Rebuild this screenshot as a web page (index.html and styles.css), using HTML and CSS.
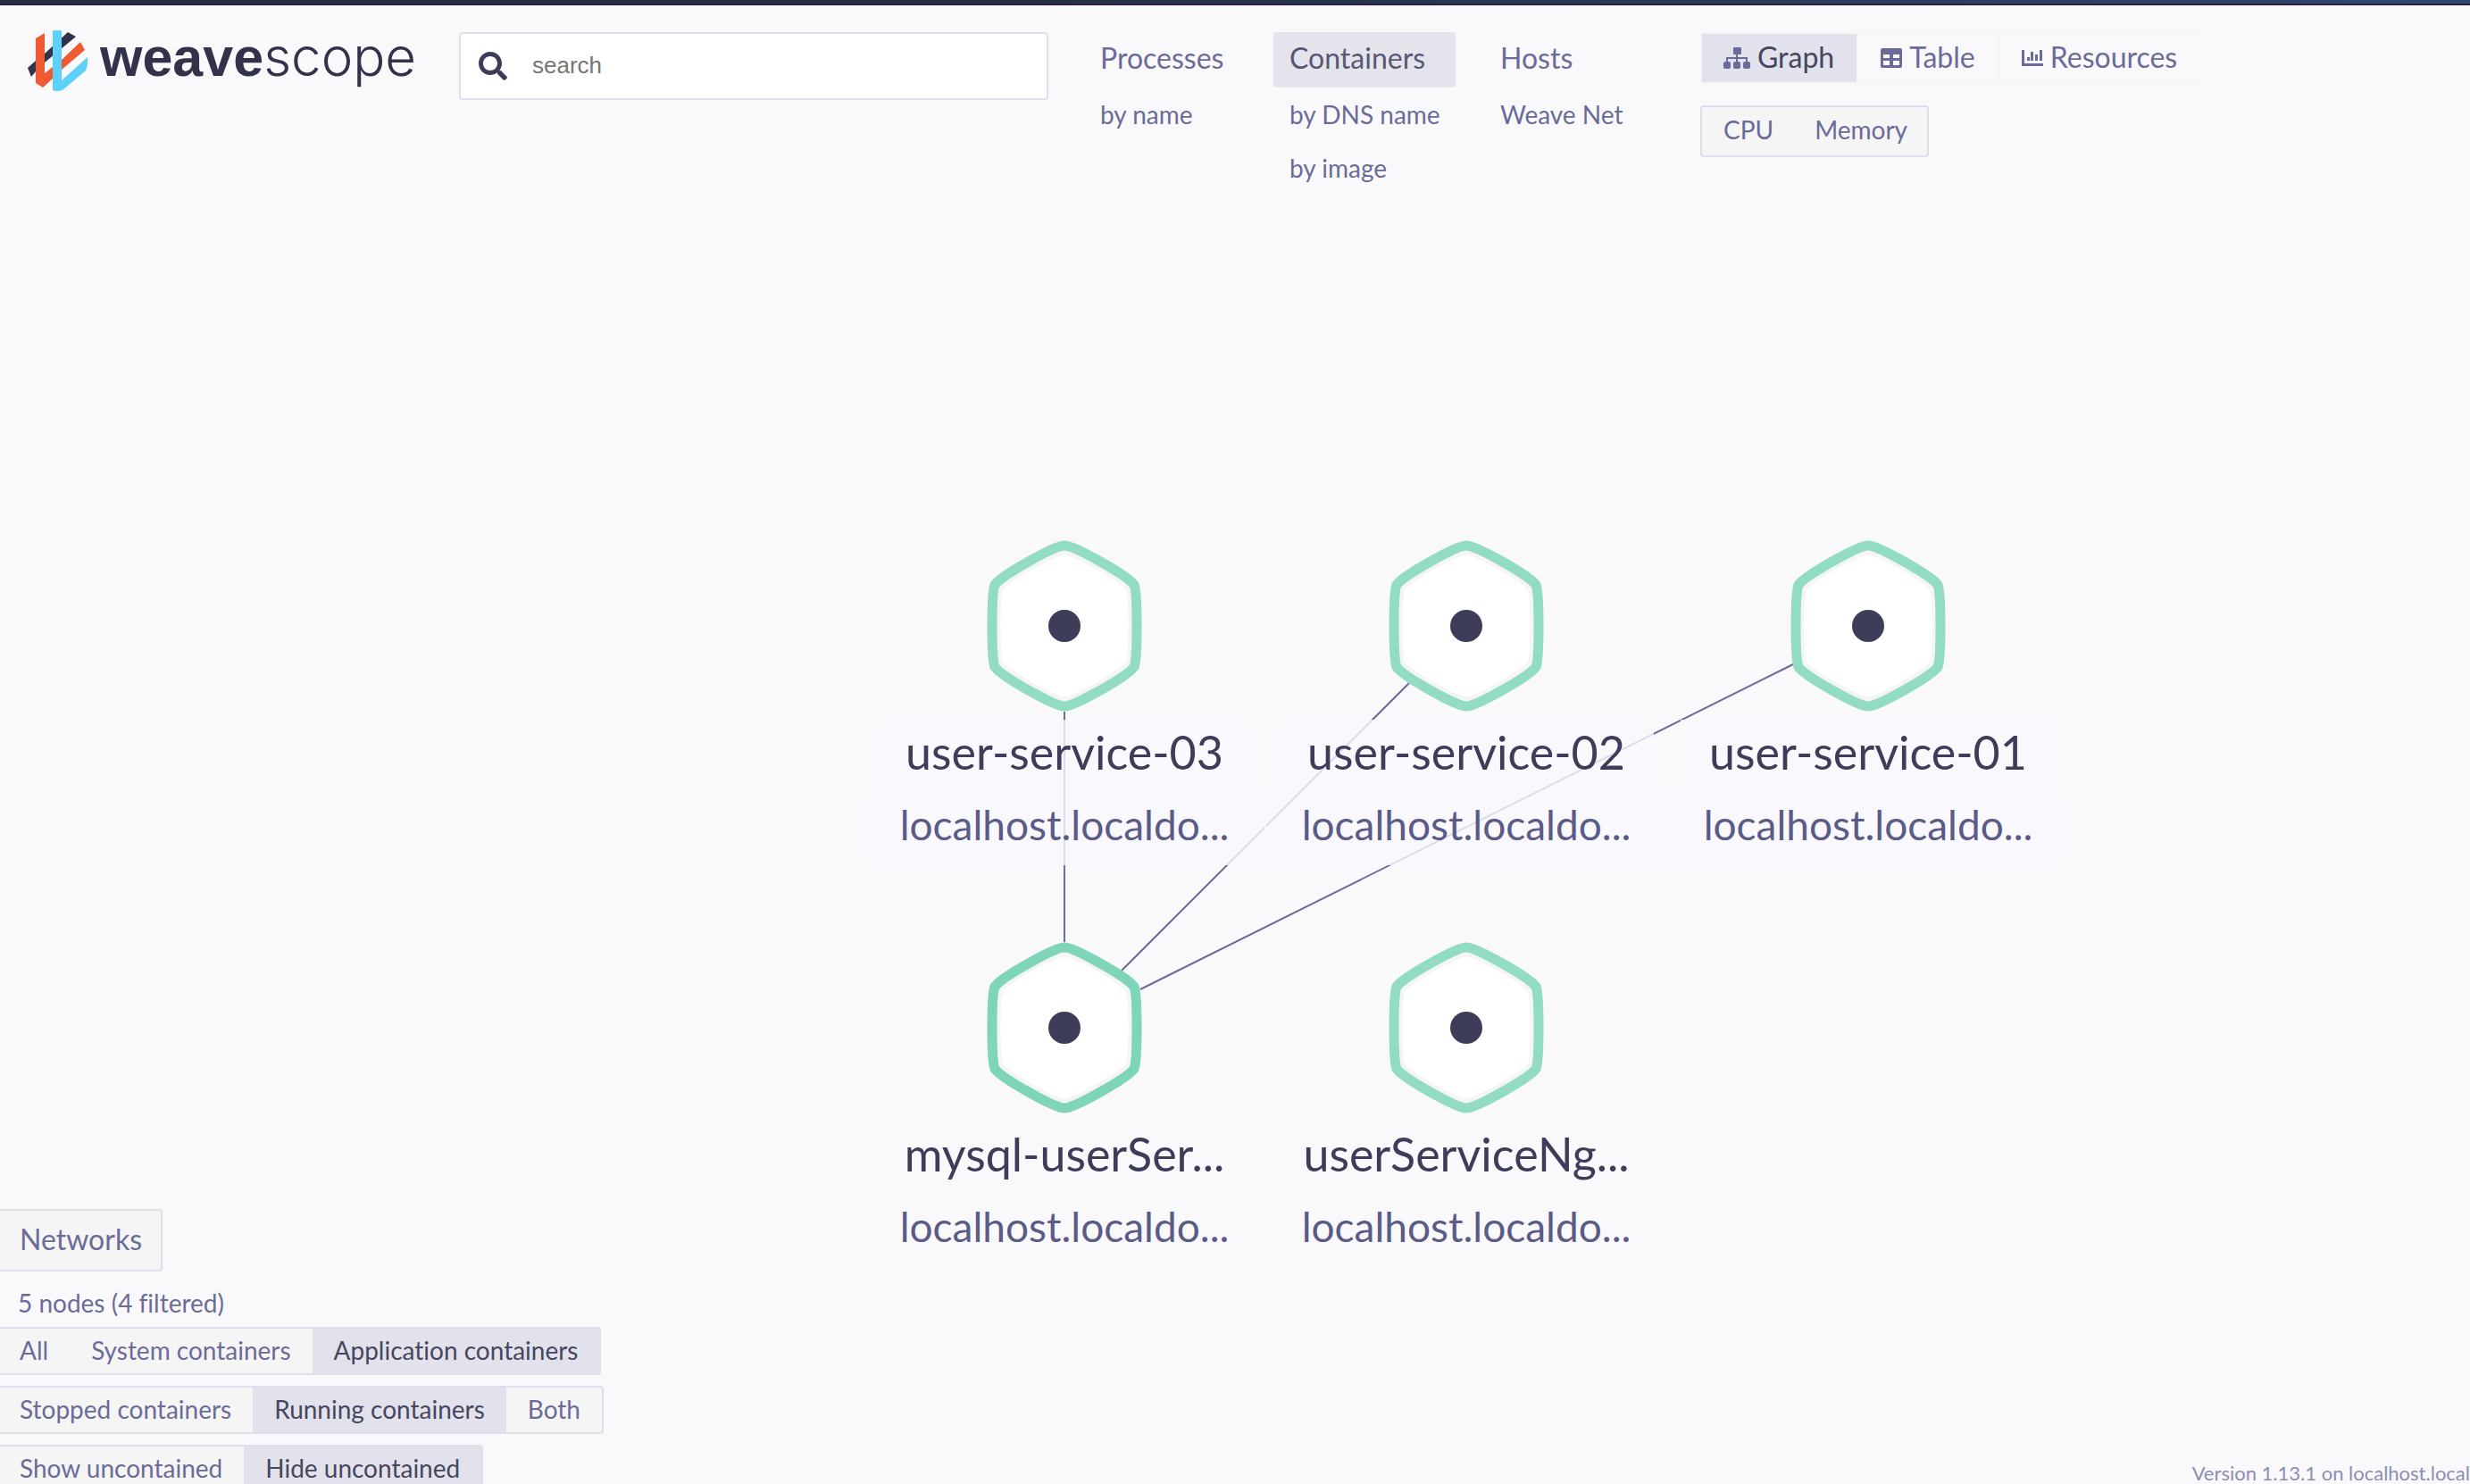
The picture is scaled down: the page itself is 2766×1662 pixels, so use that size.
FILE: index.html
```html
<!DOCTYPE html>
<html lang="en">
<head>
<meta charset="utf-8">
<title>Weave Scope</title>
<link rel="stylesheet" href="styles.css">
</head>
<body>
<div class="app">
  <div class="window-edge"></div>
  <header class="header">
    <a class="logo" href="#">
      <svg class="logo-mark" viewBox="0 0 68 68" aria-hidden="true">
        <path fill="#32324b" d="M0 42 9 34V46L4 52Z M19 26 45 2 54 7 19 36Z"/>
        <path fill="#ef5a32" d="M9 9 19 3V48L28 41V54L17 64 9 59Z M38 33 59 13 64 22 38 44Z"/>
        <path fill="#5dd0fc" d="M28 0H38V56L67 30Q68 38 65 45L39 67Q33 69 28 67Z"/>
      </svg>
      <span class="logo-text"><b class="logo-weave">weave</b><span class="logo-scope">scope</span></span>
    </a>
    <label class="search">
      <svg class="search-icon" viewBox="0 0 512 512" role="img" aria-label="Search"><path d="M505 442.700 405.300 343c-4.500-4.500-10.600-7-17-7H372c27.600-35.300 44-79.700 44-128C416 93.100 322.900 0 208 0S0 93.100 0 208s93.100 208 208 208c48.300 0 92.700-16.400 128-44v16.300c0 6.400 2.500 12.500 7 17l99.700 99.700c9.400 9.400 24.600 9.400 33.900 0l28.300-28.300c9.400-9.400 9.400-24.600.1-34zM208 336c-70.700 0-128-57.200-128-128 0-70.700 57.200-128 128-128 70.700 0 128 57.200 128 128 0 70.700-57.200 128-128 128z"/></svg>
      <input class="search-input" type="text" placeholder="search">
    </label>
    <nav class="topologies">
      <div class="topology"><a class="topology-main" href="#">Processes</a><a class="topology-sub" href="#">by name</a></div>
      <div class="topology"><a class="topology-main active" href="#">Containers</a><a class="topology-sub" href="#">by DNS name</a><a class="topology-sub" href="#">by image</a></div>
      <div class="topology"><a class="topology-main" href="#">Hosts</a><a class="topology-sub" href="#">Weave Net</a></div>
    </nav>
    <div class="views">
      <div class="view-modes">
        <button class="view-mode active" type="button"><svg class="icon-graph" viewBox="0 0 30 24" aria-hidden="true"><rect x="11" width="9" height="8" rx="1"/><path d="M14 7h2v4h11v5h-2v-3h-9v3h-2v-3H5v3H3v-5h11z"/><rect y="16" width="8" height="8" rx="2"/><rect x="11" y="16" width="8" height="8" rx="2"/><rect x="22" y="16" width="8" height="8" rx="2"/></svg>Graph</button>
        <button class="view-mode" type="button"><svg class="icon-small" viewBox="0 0 24 24" aria-hidden="true"><path fill-rule="evenodd" d="M2 1h20a2 2 0 0 1 2 2v18a2 2 0 0 1-2 2H2a2 2 0 0 1-2-2V3a2 2 0 0 1 2-2zM3 8v4h7V8zM14 8v4h7V8zM3 15v5h7v-5zM14 15v5h7v-5z"/></svg>Table</button>
        <button class="view-mode" type="button"><svg class="icon-small" viewBox="0 0 24 24" aria-hidden="true"><path d="M0 3h3v15h21v3H0zM6 11h3v4H6zM10 5h3v10h-3zM15 8h3v7h-3zM20 3h3v12h-3z"/></svg>Resources</button>
      </div>
      <div class="metrics">
        <button class="metric" type="button">CPU</button>
        <button class="metric" type="button">Memory</button>
      </div>
    </div>
  </header>

  <svg class="graph" role="img" aria-label="Container graph">
    <defs>
      <path id="hex" d="M0-90C11-90 70-57 78-46C82-36 82 36 78 46C70 57 11 90 0 90C-11 90-70 57-78 46C-82 36-82-36-78-46C-70-57-11-90 0-90Z"/>
      <g id="node"><use href="#hex" class="node-border"/><use href="#hex" class="node-fill" transform="scale(.883)"/><circle r="18" class="node-dot"/></g>
      <g id="veil"><rect class="veil" x="-210" y="105" width="420" height="82"/><rect class="veil" x="-226" y="187" width="452" height="81"/></g>
    </defs>
    <path class="edge" d="M1192 797V1055M1578 765 1256 1087M2008 744 1277 1108"/>
    <g class="node" transform="translate(1192 701)"><use href="#veil"/><use href="#node"/><text class="node-name" y="161">user-service-03</text><text class="node-host" y="240">localhost.localdo...</text></g>
    <g class="node" transform="translate(1642 701)"><use href="#veil"/><use href="#node"/><text class="node-name" y="161">user-service-02</text><text class="node-host" y="240">localhost.localdo...</text></g>
    <g class="node" transform="translate(2092 701)"><use href="#veil"/><use href="#node"/><text class="node-name" y="161">user-service-01</text><text class="node-host" y="240">localhost.localdo...</text></g>
    <g class="node strong" transform="translate(1192 1151)"><use href="#node"/><text class="node-name" y="161">mysql-userSer...</text><text class="node-host" y="240">localhost.localdo...</text></g>
    <g class="node" transform="translate(1642 1151)"><use href="#node"/><text class="node-name" y="161">userServiceNg...</text><text class="node-host" y="240">localhost.localdo...</text></g>
  </svg>

  <aside class="filters">
    <button class="networks" type="button">Networks</button>
    <p class="count">5 nodes (4 filtered)</p>
    <div class="filter-row"><button class="filter" type="button">All</button><button class="filter" type="button">System containers</button><button class="filter active" type="button">Application containers</button></div>
    <div class="filter-row"><button class="filter" type="button">Stopped containers</button><button class="filter active" type="button">Running containers</button><button class="filter" type="button">Both</button></div>
    <div class="filter-row"><button class="filter" type="button">Show uncontained</button><button class="filter active" type="button">Hide uncontained</button></div>
  </aside>
  <footer class="version">Version 1.13.1 on localhost.local</footer>
</div>
</body>
</html>
```
FILE: styles.css
```css
* { box-sizing: border-box; }
body {
  margin: 0;
  font-family: Lato, sans-serif;
  font-size: 28px;
  font-variant-ligatures: none;
  color: #6b6b9a;
  background: #f9f9fc;
}
a { color: inherit; text-decoration: none; }
button {
  margin: 0;
  border: 0;
  background: none;
  color: inherit;
  font: inherit;
  font-variant-ligatures: none;
  white-space: nowrap;
}
.app { position: relative; height: 100vh; overflow: hidden; }
.window-edge {
  height: 6px;
  border-bottom: 2px solid #2a1d45;
  background: linear-gradient(90deg, #242f42 40%, #304870);
}

/* Header */
.header { position: relative; z-index: 1; display: flex; align-items: flex-start; padding: 28px 32px 0 31px; }
.logo { display: flex; width: 483px; color: #32324b; }
.logo-mark { width: 68px; height: 68px; margin-right: 13px; }
.logo-text { display: flex; align-items: baseline; }
.logo-weave { font: 700 61px/58px "Liberation Sans", sans-serif; }
.logo-scope { font: 300 60px/58px Inter, sans-serif; }
.search {
  display: flex;
  align-items: center;
  width: 660px;
  height: 76px;
  margin-top: 2px;
  padding: 0 20px;
  border: 2px solid #dfdfeb;
  border-radius: 4px;
  background: #fff;
}
.search-icon { width: 32px; height: 32px; fill: #3d3d5a; }
.search-input {
  flex: 1;
  min-width: 0;
  margin-left: 28px;
  padding: 0 0 2px;
  border: 0;
  outline: 0;
  background: none;
  font: 26px "Liberation Sans", sans-serif;
}
.search-input::placeholder { color: #757575; }
.topologies { display: grid; grid-template-columns: 180px 204px 210px; gap: 32px; margin: 2px 0 0 40px; white-space: nowrap; }
.topology { display: flex; flex-direction: column; }
.topology-main { height: 62px; padding: 0 18px; border-radius: 4px; font-size: 32px; line-height: 58px; }
.topology-main.active { background: #e4e4ed; color: #585873; }
.topology-sub { padding: 0 18px; font-size: 28px; line-height: 60px; }
.views { margin: 2px 0 0 32px; }
.view-modes { display: flex; width: max-content; border: 2px solid #f5f5f8; border-radius: 4px; }
.view-mode {
  display: flex;
  align-items: center;
  gap: 8px;
  height: 54px;
  padding: 0 25px 4px;
  border-left: 2px solid #f5f5f8;
  font-size: 32px;
}
.view-mode:first-child { padding-left: 24px; border-left: 0; }
.view-mode.active, .filter.active { background: #e2e2ec; color: #46465f; }
.view-mode svg { position: relative; top: 2px; fill: #6b6b9a; }
.icon-graph { width: 30px; height: 24px; }
.icon-small { width: 24px; height: 24px; }
.metrics { display: flex; width: max-content; margin-top: 24px; border: 2px solid #dfdfeb; border-radius: 4px; background: #f5f5f5; }
.metric { height: 54px; padding: 0 22px 4px 24px; font-size: 28px; }

/* Graph canvas */
.graph { position: absolute; top: 0; left: 0; width: 100%; height: 100%; }
.edge { fill: none; stroke: #6b6b9a; stroke-width: 2; }
.veil { fill: #f9f9fc; fill-opacity: .8; }
.node { stroke: #92dcc2; text-anchor: middle; }
.node.strong { stroke: #7fd5b8; }
.node-border { fill: #f5f5f5; stroke-width: 11; }
.node-fill { fill: #fff; stroke: none; }
.node-dot { fill: #3d3d5a; stroke: none; }
.veil, .node text { stroke: none; }
.node-name { fill: #3d3d5a; font-size: 52px; }
.node-host { fill: #5b5b88; font-size: 46px; }

/* Overlays on the canvas */
.filters { position: absolute; left: 0; bottom: -10px; display: flex; flex-direction: column; align-items: flex-start; gap: 12px; }
.networks {
  height: 70px;
  padding: 0 21px 4px 22px;
  border: 2px solid #dfdfeb;
  border-left: 0;
  border-radius: 0 4px 4px 0;
  background: #f5f5f5;
  font-size: 32px;
}
.count { margin: 4px 0 -4px; padding-left: 20px; font-size: 28px; line-height: 38px; }
.filter-row { display: flex; border: 2px solid #dfdfeb; border-left: 0; border-radius: 0 4px 4px 0; background: #f5f5f5; }
.filter { height: 50px; padding: 0 24px 2px; font-size: 28px; }
.filter:first-child { padding-left: 22px; }
.version { position: absolute; right: 0; bottom: 0; color: #8d8db3; font-size: 22px; line-height: 24px; white-space: nowrap; }
```
